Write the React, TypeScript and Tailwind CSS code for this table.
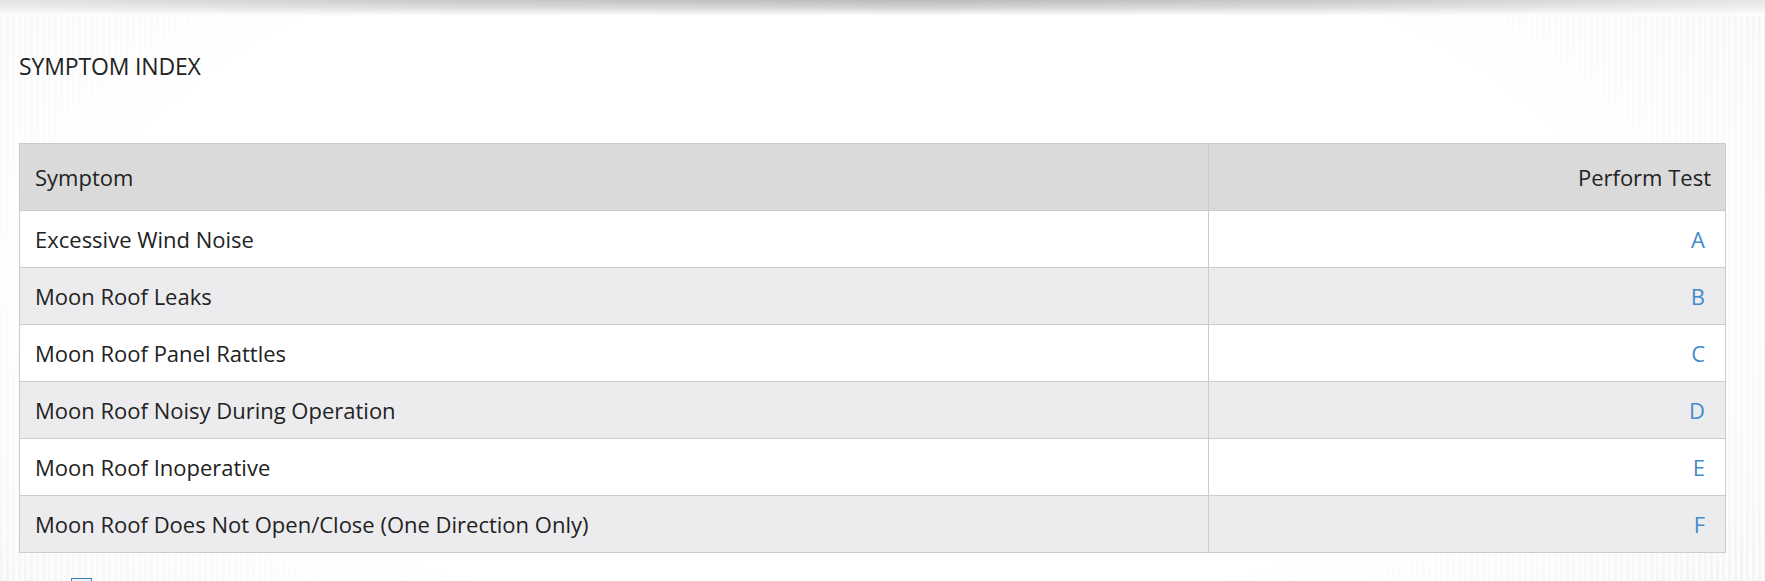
const rows = [
  { symptom: 'Excessive Wind Noise', test: 'A' },
  { symptom: 'Moon Roof Leaks', test: 'B' },
  { symptom: 'Moon Roof Panel Rattles', test: 'C' },
  { symptom: 'Moon Roof Noisy During Operation', test: 'D' },
  { symptom: 'Moon Roof Inoperative', test: 'E' },
  { symptom: 'Moon Roof Does Not Open/Close (One Direction Only)', test: 'F' },
];

export default function App() {
  return (
    <div className="min-h-[581px] w-[1765px] overflow-hidden bg-[radial-gradient(ellipse_62%_85%_at_48%_45%,#ffffff_70%,rgba(255,255,255,0)_100%),repeating-linear-gradient(90deg,#f5f5f5_0px,#f5f5f5_3px,#fcfcfc_3px,#fcfcfc_6px)] font-['Open_Sans',sans-serif] text-[#222222]">
      {/* top shadow band */}
      <div className="h-[16px] bg-[linear-gradient(90deg,#e4e4e4_0%,#c9c9c9_25%,#bababa_52%,#c9c9c9_75%,#e6e6e6_100%)]">
        <div className="h-full bg-[linear-gradient(180deg,rgba(255,255,255,0)_0%,rgba(255,255,255,0.35)_45%,#ffffff_100%)]" />
      </div>

      <h1 className="ml-[19px] mt-[35px] text-[23px] leading-[30px] font-normal tracking-[-0.15px]">
        SYMPTOM INDEX
      </h1>

      <div className="ml-[19px] mt-[62px] w-[1707px] border-x border-t border-[#cccccc] text-[22px]">
        <div className="flex h-[67px] bg-[#dadada] border-b border-[#cccccc]">
          <div className="flex w-[1189px] items-center border-r border-[#cccccc] pl-[15px]">
            Symptom
          </div>
          <div className="flex flex-1 items-center justify-end pr-[14px]">Perform Test</div>
        </div>
        {rows.map((r, i) => (
          <div
            key={r.test}
            className={`flex h-[57px] border-b border-[#cccccc] ${i % 2 === 0 ? 'bg-white' : 'bg-[#ececee]'}`}
          >
            <div className="flex w-[1189px] items-center border-r border-[#cccccc] pl-[15px]">
              {r.symptom}
            </div>
            <div className="flex flex-1 items-center justify-end pr-[20px]">
              <a href="#" className="text-[#428bca]">
                {r.test}
              </a>
            </div>
          </div>
        ))}
      </div>

      <div className="ml-[71px] mt-[25px] h-[21px] w-[21px] border border-[#3b7cc4] bg-[#eaf2fb]" />
    </div>
  );
}
